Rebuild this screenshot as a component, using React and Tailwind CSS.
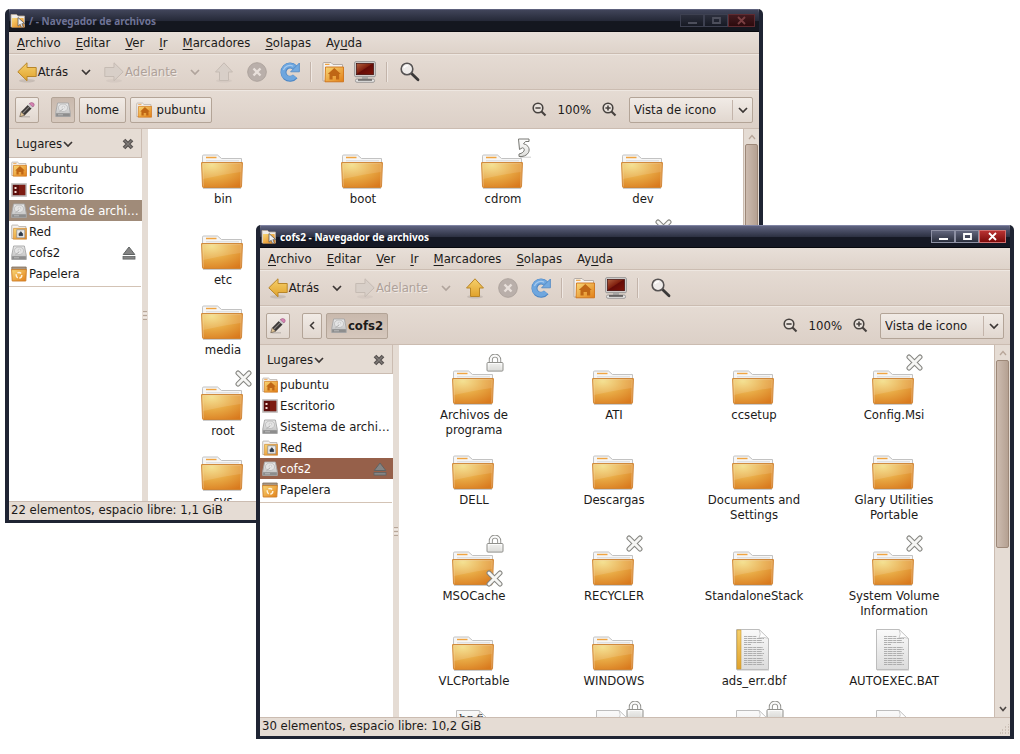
import React from "react";

const FOLDER_TAB = "M1.5 9V2.2Q1.5 1 2.7 1H16.5L20.5 4.5H40.5V9Z";

function Defs() {
  return (
    <svg width="0" height="0" className="absolute" aria-hidden="true">
      <defs>
        <radialGradient id="folder" cx="0.25" cy="0.1" r="1.05">
          <stop offset="0" stopColor="#f3dd83" />
          <stop offset="0.5" stopColor="#e8a944" />
          <stop offset="1" stopColor="#d97a1e" />
        </radialGradient>
        <linearGradient id="gold" x1="0" y1="0" x2="0" y2="1">
          <stop offset="0" stopColor="#f6d06c" />
          <stop offset="1" stopColor="#e0a22c" />
        </linearGradient>
        <linearGradient id="orange" x1="0" y1="0" x2="1" y2="1">
          <stop offset="0" stopColor="#f8d878" />
          <stop offset="1" stopColor="#e27f17" />
        </linearGradient>
        <linearGradient id="paper" x1="0" y1="0" x2="0" y2="1">
          <stop offset="0" stopColor="#fafafa" />
          <stop offset="1" stopColor="#dcdcdc" />
        </linearGradient>
        <linearGradient id="emblem" x1="0" y1="0" x2="0" y2="1">
          <stop offset="0" stopColor="#ffffff" />
          <stop offset="1" stopColor="#dededb" />
        </linearGradient>
        <linearGradient id="screen" x1="0" y1="0" x2="1" y2="1">
          <stop offset="0" stopColor="#b0603f" />
          <stop offset="0.45" stopColor="#82210f" />
          <stop offset="0.5" stopColor="#650c08" />
          <stop offset="1" stopColor="#7e1408" />
        </linearGradient>
        <linearGradient id="drive" x1="0" y1="0" x2="0" y2="1">
          <stop offset="0" stopColor="#e9e9e9" />
          <stop offset="1" stopColor="#bdbdbd" />
        </linearGradient>
      </defs>
    </svg>
  );
}

function FolderIcon() {
  return (
    <svg width="42" height="35" viewBox="0 0 42 35" aria-hidden="true">
      <path d="M2 34.3H40" stroke="#000" strokeOpacity="0.2" strokeWidth="1.2" />
      <path d={FOLDER_TAB} fill="#f6f6f6" stroke="#c2c2c2" />
      <path d="M5 3.5H15.5" stroke="#f0a440" strokeWidth="1.4" />
      <path d="M5 6.8H38" stroke="#d9d9d9" />
      <path d="M0.6 8.6H41.4L40.5 32.6Q40.4 33.5 39.5 33.5H2.5Q1.6 33.5 1.5 32.6Z" fill="url(#folder)" stroke="#cf8433" />
      <path d="M1.8 9.6H40.2L39.8 18Q24 20 2.2 25Z" fill="#fff" fillOpacity="0.13" />
      <path d="M2.4 32.5L1.7 9.6H40.3L39.6 32.5" fill="none" stroke="#fff" strokeOpacity="0.3" strokeWidth="0.8" />
    </svg>
  );
}

function DocIcon({ variant }) {
  const lines = [7.5, 9.5, 11.5, 13.5, 15.5, 18.5, 20.5, 22.5, 24.5, 26.5, 29.5, 31.5, 33.5, 35.5];
  return (
    <svg width="34" height="42" viewBox="0 0 34 42" aria-hidden="true">
      <path d="M1 41.3H33" stroke="#000" strokeOpacity="0.15" />
      <path d="M0.5 0.5H23L32.5 9.5V40.5H0.5Z" fill="url(#paper)" stroke="#bdbdbd" />
      <path d="M23 0.5Q25.5 5 23 9Q28 7.5 32.5 9.5Z" fill="#fff" stroke="#c4c4c4" strokeWidth="0.8" />
      {variant === "font" ? (
        <text x="3" y="12" fontSize="11" fill="#333" fontFamily="DejaVu Serif, serif">bg fi</text>
      ) : (
        lines.map((y, i) => (
          <path key={y} d={`M8 ${y}H${i === 4 ? 15 : y < 9 ? 21 : [27, 28, 26, 28, 27][i % 5]}`} stroke="#a3a3a3" strokeOpacity="0.85" strokeDasharray="3 0.6 5 0.6" />
        ))
      )}
      {variant === "db" && <path d="M1 1H5V40H1Z" fill="url(#gold)" stroke="#c99a34" strokeWidth="0.6" />}
    </svg>
  );
}

function CrossEmblem() {
  const d = "M3 3L14 14M14 3L3 14";
  return (
    <svg width="17" height="17" viewBox="0 0 17 17" aria-hidden="true">
      <path d={d} stroke="#858580" strokeWidth="5" strokeLinecap="round" />
      <path d={d} stroke="#f6f6f4" strokeWidth="3" strokeLinecap="round" />
    </svg>
  );
}

function LockEmblem() {
  return (
    <svg width="18" height="18" viewBox="0 0 18 18" aria-hidden="true">
      <path d="M4.8 9V5.8A4.2 4.2 0 0 1 13.2 5.8V9" fill="none" stroke="#8e8e8a" strokeWidth="4" />
      <path d="M4.8 9V5.8A4.2 4.2 0 0 1 13.2 5.8V9" fill="none" stroke="#fafafa" strokeWidth="2.2" />
      <rect x="1" y="8.5" width="16" height="8.6" rx="1" fill="url(#emblem)" stroke="#90908c" />
      <path d="M3.5 11H14.5M3.5 13H14.5M3.5 15H14.5" stroke="#d4d4d0" strokeWidth="0.7" />
    </svg>
  );
}

function LinkEmblem() {
  return (
    <svg width="17" height="20" viewBox="0 0 17 20" aria-hidden="true">
      <path d="M5 19.2H16" stroke="#000" strokeOpacity="0.2" />
      <path d="M3.5 1H14V3.5H10.5L8.5 5.8C14 7 15 11.5 13.5 14.5C12 17.5 8 19 4 18.5V16C7 15.5 9.3 13.5 9.3 11.8C9.3 10.5 8.5 10 7.3 9.8L4.5 11.5Z" fill="url(#emblem)" stroke="#777772" />
    </svg>
  );
}

function HomeFolder({ size }) {
  return (
    <svg width={size} height={size} viewBox="0 0 22 22" aria-hidden="true">
      <path d="M1 20V2.5Q1 1.5 2 1.5H9L11 3.5H20.5V20Z" fill="#f4f2f0" stroke="#b5aca6" />
      <path d="M3 3.3H7.5" stroke="#efa345" strokeWidth="1.2" />
      <path d="M3.5 6H21.5V20.8H3Z" fill="url(#orange)" stroke="#cf7318" strokeWidth="0.9" />
      <path d="M12.3 7L18.8 13H17.2V18.5H14V15H10.6V18.5H7.5V13H5.8Z" fill="#bf6615" />
    </svg>
  );
}

function NetFolder() {
  return (
    <svg width="16" height="16" viewBox="0 0 22 22" aria-hidden="true">
      <path d="M1 20V2.5Q1 1.5 2 1.5H9L11 3.5H20.5V20Z" fill="#f4f2f0" stroke="#aaa29c" />
      <path d="M3.5 6H21.5V20.8H3Z" fill="url(#orange)" stroke="#cf8a38" strokeWidth="0.9" />
      <rect x="8" y="8" width="11" height="11" fill="#e9e9e9" stroke="#909090" />
      <path d="M11 16V13.5L13.5 10.5L16 13.5V16Z" fill="#2e3a48" stroke="#2e3a48" />
    </svg>
  );
}

function DriveIcon() {
  return (
    <svg width="16" height="16" viewBox="0 0 16 16" aria-hidden="true">
      <path d="M2.6 1H13.4L15.3 10.5V14.5H0.7V10.5Z" fill="url(#drive)" stroke="#a6a6a6" strokeWidth="0.9" />
      <path d="M1.1 11.2H14.9V14.2H1.1Z" fill="#8d8d8d" />
      <ellipse cx="8" cy="5.8" rx="4.6" ry="3.8" fill="#e4e4e4" stroke="#bababa" strokeWidth="0.8" />
      <ellipse cx="8.4" cy="5.2" rx="1.4" ry="1" fill="#f8f8f8" stroke="#b0b0b0" strokeWidth="0.5" />
      <path d="M4.4 9.8L8 7" stroke="#b0b0b0" />
      <path d="M3 12.8H8" stroke="#c8c8c8" strokeWidth="0.8" />
    </svg>
  );
}

function DesktopIcon() {
  return (
    <svg width="16" height="16" viewBox="0 0 16 16" aria-hidden="true">
      <rect x="1" y="2" width="14" height="12" fill="#5c0d0a" stroke="#bdbab8" strokeWidth="1.6" />
      <path d="M8 2.9H14.2V13.1H8Z" fill="#7d1c12" />
      <path d="M3.5 5H5.5V7H3.5ZM3.5 9H5.5V11H3.5Z" fill="#f3d8d0" />
    </svg>
  );
}

function TrashIcon() {
  return (
    <svg width="16" height="16" viewBox="0 0 16 16" aria-hidden="true">
      <path d="M0.8 1H15.2V4H0.8Z" fill="#a99783" stroke="#7f6d5b" strokeWidth="0.8" />
      <path d="M0.6 3.6H15.4L14.8 15H1.2Z" fill="url(#orange)" stroke="#cd7e28" strokeWidth="0.9" />
      <circle cx="8" cy="9.3" r="2.8" fill="none" stroke="#fff3dc" strokeWidth="1.4" strokeDasharray="4 1.6" />
    </svg>
  );
}

function Arrow({ dir, disabled }) {
  const paths = {
    left: "M0.8 9.8L10 0.8V5.5H19.2V14.5H10V18.8Z",
    right: "M19.2 9.8L10 0.8V5.5H0.8V14.5H10V18.8Z",
    up: "M10 0.8L18.5 10H14.5V18.5H5.5V10H1.5Z",
  };
  return (
    <svg width="20" height="21" viewBox="0 0 20 21" aria-hidden="true">
      <ellipse cx="10" cy="18.8" rx="8" ry="1.8" fill="#000" fillOpacity={disabled ? 0.04 : 0.1} />
      <path d={paths[dir]} fill={disabled ? "#d8cfc8" : "url(#gold)"} stroke={disabled ? "#c5bbb3" : "#b8862a"} strokeLinejoin="round" />
    </svg>
  );
}

function Chevron({ color = "#3b3634", size = 10 }) {
  return (
    <svg width={size} height={size} viewBox="0 0 10 10" aria-hidden="true">
      <path d="M1 3L5 7L9 3" fill="none" stroke={color} strokeWidth="1.7" />
    </svg>
  );
}

function StopIcon() {
  return (
    <svg width="20" height="20" viewBox="0 0 20 20" aria-hidden="true">
      <circle cx="10" cy="10" r="9.3" fill="#b9afaa" stroke="#ada39d" />
      <path d="M6.5 6.5L13.5 13.5M13.5 6.5L6.5 13.5" stroke="#e8e0db" strokeWidth="2.4" />
    </svg>
  );
}

function ReloadIcon() {
  return (
    <svg width="20" height="20" viewBox="0 0 20 20" aria-hidden="true">
      <path d="M14.8 5.6A6.6 6.6 0 1 0 15.2 14.4" fill="none" stroke="#4c86c4" strokeWidth="6" />
      <path d="M14.8 5.6A6.6 6.6 0 1 0 14.8 14.2" fill="none" stroke="#6ea6de" strokeWidth="4.6" />
      <path d="M19.4 1V9.8H10.6Z" fill="#74aae0" stroke="#4c86c4" strokeWidth="0.8" />
      <path d="M13.2 4.2A7 7 0 0 0 3.4 8" fill="none" stroke="#a5c9ee" strokeWidth="1.2" />
    </svg>
  );
}

function ComputerIcon() {
  return (
    <svg width="22" height="22" viewBox="0 0 22 22" aria-hidden="true">
      <rect x="0.7" y="0.7" width="20.6" height="15" rx="1" fill="#d9d7d6" stroke="#92908f" />
      <rect x="2.5" y="2.5" width="17" height="11.2" fill="url(#screen)" stroke="#3c0805" strokeWidth="0.7" />
      <path d="M8 16H14V18H8Z" fill="#a9a7a5" />
      <rect x="1.5" y="18" width="19" height="3.3" rx="1.4" fill="#e4e3e2" stroke="#8e8c8b" strokeWidth="0.8" />
      <path d="M4 19H18" stroke="#2a2827" strokeWidth="1.2" />
    </svg>
  );
}

function SearchIcon() {
  return (
    <svg width="20" height="20" viewBox="0 0 20 20" aria-hidden="true">
      <path d="M11.5 11.5L18 17.8" stroke="#3a3838" strokeWidth="2.8" strokeLinecap="round" />
      <circle cx="7" cy="7" r="5.8" fill="#eeebe9" stroke="#555252" strokeWidth="1.6" />
      <path d="M4 6Q5 3.5 8 3.6" fill="none" stroke="#fff" strokeWidth="1.4" />
    </svg>
  );
}

function ZoomIcon({ plus }) {
  return (
    <svg width="15" height="15" viewBox="0 0 15 15" aria-hidden="true">
      <path d="M9.5 9.5L13.5 13.5" stroke="#47423f" strokeWidth="2.2" />
      <circle cx="6" cy="6" r="4.8" fill="#eae3dd" stroke="#47423f" strokeWidth="1.6" />
      <path d={plus ? "M3.4 6H8.6M6 3.4V8.6" : "M3.4 6H8.6"} stroke="#47423f" strokeWidth="1.6" />
    </svg>
  );
}

function PencilIcon() {
  return (
    <svg width="16" height="16" viewBox="0 0 16 16" aria-hidden="true">
      <path d="M2 14.8H11" stroke="#000" strokeOpacity="0.15" strokeWidth="1.5" />
      <path d="M0.8 14.8L2.2 9.8L5.8 13.2Z" fill="#e2c698" stroke="#55483a" strokeWidth="0.6" />
      <path d="M2.2 9.8L8.8 3L12.6 6.4L5.8 13.2Z" fill="#3a3736" />
      <path d="M4 11L10.4 4.6" stroke="#85807e" strokeWidth="1.1" />
      <path d="M8.8 3L10.2 1.6L14 5L12.6 6.4Z" fill="#cfcfcf" />
      <path d="M10.2 1.6Q12.5 -0.4 14.6 1.2Q16.2 3 14 5Z" fill="#d682b2" stroke="#8f4b74" strokeWidth="0.5" />
    </svg>
  );
}

function AppIcon() {
  return (
    <svg width="16" height="16" viewBox="0 0 16 16" aria-hidden="true">
      <path d="M1 14V1.5H6.5L8 3H14.5V14Z" fill="#efece8" stroke="#b8a898" strokeWidth="0.8" />
      <path d="M2 5H13.5L14.5 14.5H2Z" fill="url(#orange)" />
      <path d="M8 4.5V13.2L10.2 11.3L11.6 14.6L13.3 13.8L11.9 10.7H14.8Z" fill="#f2f2f2" stroke="#5e5e5e" strokeWidth="0.8" />
    </svg>
  );
}

function EjectIcon() {
  return (
    <svg width="14" height="14" viewBox="0 0 14 14" aria-hidden="true">
      <path d="M7 1L12.8 8.5H1.2Z" fill="#858585" stroke="#5f6363" />
      <rect x="1" y="10.5" width="12" height="2.6" fill="#858585" stroke="#5f6363" strokeWidth="0.8" />
    </svg>
  );
}

function CloseCross() {
  return (
    <svg width="12" height="12" viewBox="0 0 12 12" aria-hidden="true">
      <path d="M2 2L10 10M10 2L2 10" stroke="#55504e" strokeWidth="3.8" />
      <path d="M2.5 2.5L9.5 9.5M9.5 2.5L2.5 9.5" stroke="#817c79" strokeWidth="1.4" />
    </svg>
  );
}

const MENUS = [
  ["", "A", "rchivo"],
  ["", "E", "ditar"],
  ["", "V", "er"],
  ["", "I", "r"],
  ["", "M", "arcadores"],
  ["", "S", "olapas"],
  ["Ay", "u", "da"],
];

const PLACES = [
  { name: "pubuntu", icon: <HomeFolder size={16} /> },
  { name: "Escritorio", icon: <DesktopIcon /> },
  { name: "Sistema de archi…", icon: <DriveIcon /> },
  { name: "Red", icon: <NetFolder /> },
  { name: "cofs2", icon: <DriveIcon />, eject: true },
  { name: "Papelera", icon: <TrashIcon /> },
];

const EMBLEMS = { x: CrossEmblem, lock: LockEmblem, link: LinkEmblem };

function FileItem({ file }) {
  if (!file) return <li className="w-[140px] shrink-0" />;
  const Emblem = EMBLEMS[file.emblem];
  return (
    <li className="flex w-[140px] shrink-0 flex-col items-center">
      <div className="relative flex h-[41px] w-[46px] items-end justify-center pr-[2px]">
        {file.doc ? <DocIcon variant={file.doc} /> : <FolderIcon />}
        {Emblem && (
          <span className="absolute -top-[10px] left-[35px]">
            <Emblem />
          </span>
        )}
        {file.crossed && (
          <span className="absolute top-[25px] left-[35px]">
            <CrossEmblem />
          </span>
        )}
      </div>
      <span className="mt-[2px] max-w-[104px] text-center leading-[15px]">{file.name}</span>
    </li>
  );
}

function TitleButton({ label, active, close, children }) {
  let tone = active
    ? "border-[#8d90a3] from-[#62667d] to-[#2c303e] text-white"
    : "border-[#3d4050] from-[#2c2f3d] to-[#171a24] text-[#4d4f5c]";
  if (close) {
    tone = active
      ? "border-[#d07070] from-[#b83232] to-[#7d0808] text-white"
      : "border-[#5e2b31] from-[#431b20] to-[#2c0a0d] text-[#7a3f42]";
  }
  return (
    <button aria-label={label} className={`flex h-[13px] items-center justify-center border bg-linear-to-b ${close ? "w-[27px]" : "w-6"} ${tone}`}>
      <svg width="11" height="9" viewBox="0 0 11 9" fill="none" stroke="currentColor" strokeWidth="1.8" aria-hidden="true">
        {children}
      </svg>
    </button>
  );
}

const Divider = ({ className }) => (
  <span className={`h-5 w-[2px] border-l border-[#c3b4aa] bg-[#efe8e3] ${className}`} />
);

const PATH_BUTTON = "flex h-[26px] items-center justify-center rounded-[2px] border border-[#b3a497]";
const RAISED = "bg-linear-to-b from-[#f1ebe6] to-[#e1d7cf]";
const PRESSED = "bg-linear-to-b from-[#c9b9ad] to-[#d6c8bd]";

function FileWindow({ id, place, title, active, canGoUp, path, places, selected, rows, status }) {
  const selectedTone = active ? "bg-[#96604a] text-white" : "bg-[#a08b79] text-white";
  return (
    <section
      aria-label={title}
      className={`absolute flex flex-col overflow-hidden rounded-t-[5px] border-x-[4px] border-b-[3px] border-[#1f2433] bg-[#e4dad2] ${place}`}
    >
      <header
        className={`-mx-[3px] flex h-[23px] shrink-0 items-center border-t border-b border-b-[#08090e] bg-linear-to-b from-0% via-50% to-55% pr-[7px] pl-[4px] ${
          active ? "border-t-[#8084a4] from-[#5f6380] via-[#2e3244] to-[#151824]" : "border-t-[#5d617c] from-[#41455a] via-[#262a39] to-[#14171f]"
        }`}
      >
        <AppIcon />
        <h1 className={`ml-[3px] flex-1 font-['Noto_Sans',sans-serif] text-[10px] font-bold ${active ? "text-white" : "text-[#6f7396]"}`}>{title}</h1>
        <TitleButton label="Minimizar" active={active}>
          <path d="M1 7H10" />
        </TitleButton>
        <TitleButton label="Maximizar" active={active}>
          <path d="M2 2H9V7H2Z" />
        </TitleButton>
        <TitleButton label="Cerrar" active={active} close>
          <path d="M2 1L9 8M9 1L2 8" />
        </TitleButton>
      </header>

      <nav className="flex h-[22px] shrink-0 items-center gap-[15px] border-b border-[#cbbcb1] bg-linear-to-b from-[#e8dfd8] to-[#ded3ca] pl-2">
        {MENUS.map(([before, key, after]) => (
          <button key={key + after}>
            {before}
            <u className="underline-offset-2">{key}</u>
            {after}
          </button>
        ))}
      </nav>

      <div className="flex h-9 shrink-0 items-center border-t border-b border-t-[#eee7e1] border-b-[#cbbcb1] bg-linear-to-b from-[#e5dbd3] to-[#dcd0c7] pl-2">
        <button className="flex items-center">
          <Arrow dir="left" />
          <span className="w-8">Atrás</span>
        </button>
        <button aria-label="Historial hacia atrás" className="ml-3">
          <Chevron />
        </button>
        <button disabled className="ml-[13px] flex items-center text-[#aea199] [text-shadow:1px_1px_0_#f0eae6]">
          <Arrow dir="right" disabled />
          <span className="w-[54px]">Adelante</span>
        </button>
        <button disabled aria-label="Historial hacia adelante" className="ml-3">
          <Chevron color="#b0a49c" />
        </button>
        <button aria-label="Subir" disabled={!canGoUp} className="ml-[14px]">
          <Arrow dir="up" disabled={!canGoUp} />
        </button>
        <button aria-label="Detener" disabled className="ml-[13px]">
          <StopIcon />
        </button>
        <button aria-label="Recargar" className="ml-[13px]">
          <ReloadIcon />
        </button>
        <Divider className="ml-[10px]" />
        <button aria-label="Carpeta personal" className="ml-[10px]">
          <HomeFolder size={22} />
        </button>
        <button aria-label="Equipo" className="ml-[10px]">
          <ComputerIcon />
        </button>
        <Divider className="ml-[10px]" />
        <button aria-label="Buscar" className="ml-3">
          <SearchIcon />
        </button>
      </div>

      <div className="flex h-[39px] shrink-0 items-center border-t border-b border-t-[#eee7e1] border-b-[#cbbcb1] bg-linear-to-b from-[#e5dbd3] to-[#dcd0c7] pr-[6px] pl-[6px]">
        <button aria-label="Editar ubicación" className={`mr-3 w-6 ${PATH_BUTTON} ${RAISED}`}>
          <PencilIcon />
        </button>
        <div className="flex flex-1 gap-1">{path}</div>
        <button aria-label="Reducir">
          <ZoomIcon />
        </button>
        <span className="mx-[11px]">100%</span>
        <button aria-label="Ampliar">
          <ZoomIcon plus />
        </button>
        <div className="relative ml-3">
          <label htmlFor={`${id}-view`} className="sr-only">Modo de vista</label>
          <select
            id={`${id}-view`}
            className={`h-[26px] w-[124px] appearance-none rounded-[2px] border border-[#b3a497] pl-1 ${RAISED}`}
          >
            <option>Vista de icono</option>
          </select>
          <span className="pointer-events-none absolute top-[3px] right-0 flex h-5 w-[21px] items-center justify-center border-l border-[#c3b4aa]">
            <Chevron />
          </span>
        </div>
      </div>

      <div className="flex min-h-0 flex-1">
        <aside className="w-[133px] shrink-0 bg-white">
          <div className="flex h-[29px] items-center justify-between border-r border-b border-[#cbbcb1] bg-[#e5dcd4] pt-[2px] pr-[7px] pl-[7px]">
            <button className="flex items-center gap-px">
              Lugares
              <Chevron />
            </button>
            <button aria-label="Cerrar el panel lateral">
              <CloseCross />
            </button>
          </div>
          <ul className="mr-px border-b border-[#d3c3b5] pb-[2px]">
            {places.map((p) => (
              <li key={p.name} className={`-mr-px flex h-[21px] items-center pr-[6px] pl-[2px] ${p.name === selected ? selectedTone : ""}`}>
                <button className="flex flex-1 items-center gap-[2px] whitespace-nowrap">
                  {p.icon}
                  {p.name}
                </button>
                {p.eject && (
                  <button aria-label="Expulsar">
                    <EjectIcon />
                  </button>
                )}
              </li>
            ))}
          </ul>
        </aside>
        <div className="flex w-[6px] shrink-0 flex-col items-center justify-center gap-px bg-[#e5dcd4]">
          <i className="h-px w-1 bg-[#b7a699]" />
          <i className="h-px w-1 bg-[#f0e9e4]" />
          <i className="h-px w-1 bg-[#b7a699]" />
          <i className="h-px w-1 bg-[#f0e9e4]" />
          <i className="h-px w-1 bg-[#b7a699]" />
        </div>
        <main className="min-w-0 flex-1 overflow-hidden bg-white pt-2 pl-[5px]">
          {rows.map((row, i) => (
            <ul key={i} className={`flex pb-3 ${row.some((f) => f && f.emblem) ? "pt-[11px]" : ""}`}>
              {row.map((file, j) => (
                <FileItem key={j} file={file} />
              ))}
            </ul>
          ))}
        </main>
        <div className="flex w-4 shrink-0 flex-col border-l border-[#cbbcb1] bg-[#e5dcd4]" aria-hidden="true">
          <div className="flex h-[15px] items-center justify-center">
            <svg width="8" height="6" viewBox="0 0 8 6">
              <path d="M1 5L4 1.5L7 5" fill="none" stroke="#b7a699" strokeWidth="1.3" />
            </svg>
          </div>
          <div className="mx-px h-[188px] rounded-[2px] border border-[#9d8878] bg-linear-to-r from-[#cdbcb0] to-[#b5a192]" />
          <div className="mt-auto flex h-[17px] items-center justify-center">
            <svg width="8" height="6" viewBox="0 0 8 6">
              <path d="M1 1L4 4.5L7 1" fill="none" stroke="#4d4744" strokeWidth="1.6" />
            </svg>
          </div>
        </div>
      </div>

      <footer className="flex h-[19px] shrink-0 items-center justify-between border-t border-[#cbbcb1] bg-[#e5dcd4] pb-[2px] pl-[2px]">
        {status}
        <svg width="10" height="10" viewBox="0 0 10 10" className="self-end" aria-hidden="true">
          <path d="M8 0H9M5 3H6M8 3H9M2 6H3M5 6H6M8 6H9M0 9H1M2 9H3M5 9H6M8 9H9" stroke="#b3a497" strokeWidth="1.2" />
        </svg>
      </footer>
    </section>
  );
}

const ROOT_ROWS = [
  [{ name: "bin" }, { name: "boot" }, { name: "cdrom", emblem: "link" }, { name: "dev" }],
  [{ name: "etc" }, null, null, { name: "", emblem: "x" }],
  [{ name: "media" }],
  [{ name: "root", emblem: "x" }],
  [{ name: "sys" }],
];

const COFS_ROWS = [
  [{ name: "Archivos de programa", emblem: "lock" }, { name: "ATI" }, { name: "ccsetup" }, { name: "Config.Msi", emblem: "x" }],
  [{ name: "DELL" }, { name: "Descargas" }, { name: "Documents and Settings" }, { name: "Glary Utilities Portable" }],
  [
    { name: "MSOCache", emblem: "lock", crossed: true },
    { name: "RECYCLER", emblem: "x" },
    { name: "StandaloneStack" },
    { name: "System Volume Information", emblem: "x" },
  ],
  [{ name: "VLCPortable" }, { name: "WINDOWS" }, { name: "ads_err.dbf", doc: "db" }, { name: "AUTOEXEC.BAT", doc: "text" }],
  [
    { name: "", doc: "font" },
    { name: "", doc: "text", emblem: "lock" },
    { name: "", doc: "text", emblem: "lock" },
    { name: "", doc: "text" },
  ],
];

export default function App() {
  return (
    <div className="relative min-h-screen overflow-hidden bg-white font-['DejaVu_Sans_Condensed','DejaVu_Sans',sans-serif] text-[13px] leading-4 text-[#1c1a19]">
      <Defs />
      <FileWindow
        id="root-window"
        place="top-[9px] right-[257px] bottom-[231px] left-[5px]"
        title="/ - Navegador de archivos"
        places={PLACES}
        selected="Sistema de archi…"
        rows={ROOT_ROWS}
        status="22 elementos, espacio libre: 1,1 GiB"
        path={
          <>
            <button aria-label="Sistema de archivos" className={`w-6 ${PATH_BUTTON} ${PRESSED}`}>
              <DriveIcon />
            </button>
            <button className={`w-[47px] ${PATH_BUTTON} ${RAISED}`}>home</button>
            <button className={`w-[82px] gap-1 ${PATH_BUTTON} ${RAISED}`}>
              <HomeFolder size={16} />
              pubuntu
            </button>
          </>
        }
      />
      <FileWindow
        id="cofs2-window"
        place="top-[225px] right-[6px] bottom-[15px] left-[256px]"
        title="cofs2 - Navegador de archivos"
        active
        canGoUp
        places={PLACES}
        selected="cofs2"
        rows={COFS_ROWS}
        status="30 elementos, espacio libre: 10,2 GiB"
        path={
          <>
            <button aria-label="Desplazar la ruta" className={`w-5 ${PATH_BUTTON} ${RAISED}`}>
              <svg width="6" height="9" viewBox="0 0 6 9" aria-hidden="true">
                <path d="M5 1L1.5 4.5L5 8" fill="none" stroke="#3b3634" strokeWidth="1.5" />
              </svg>
            </button>
            <button className={`w-[62px] gap-px font-bold ${PATH_BUTTON} ${PRESSED}`}>
              <DriveIcon />
              cofs2
            </button>
          </>
        }
      />
    </div>
  );
}
